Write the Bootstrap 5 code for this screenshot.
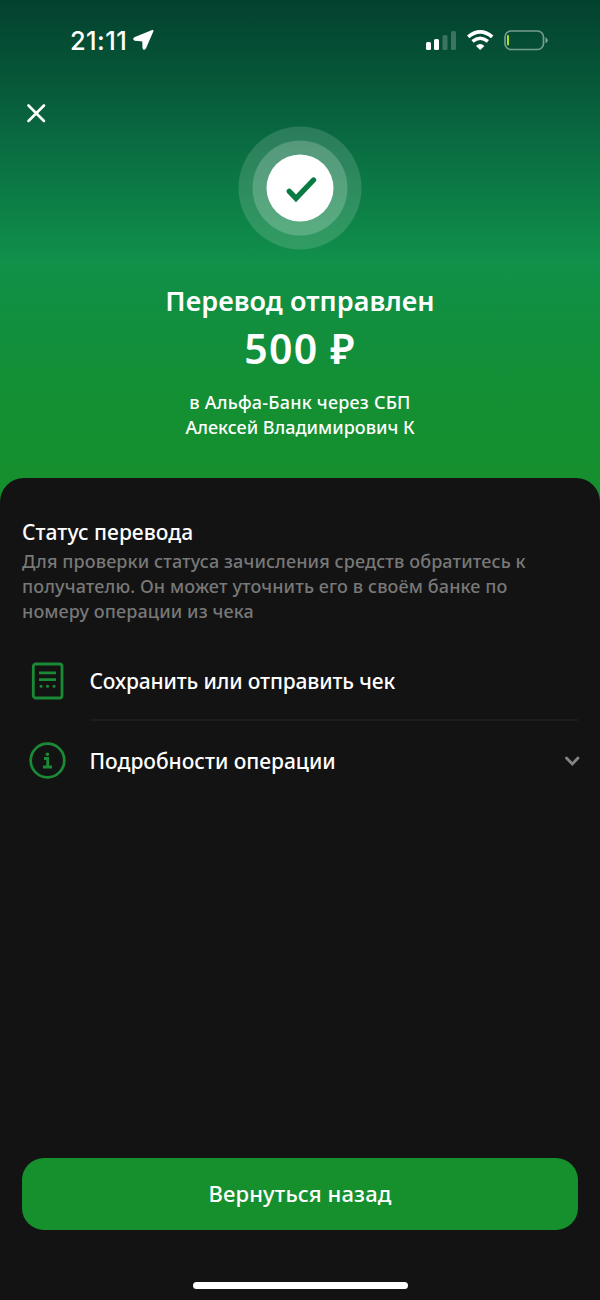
<!DOCTYPE html>
<html lang="ru">
<head>
<meta charset="utf-8">
<meta name="viewport" content="width=device-width, initial-scale=1">
<title>Перевод отправлен</title>
<link href="https://cdn.jsdelivr.net/npm/bootstrap@5.3.0/dist/css/bootstrap.min.css" rel="stylesheet">
<style>
  body { background: #131313; color: #fff; font-family: "Noto Sans", "Open Sans", sans-serif; font-weight: 500; }
  .screen { height: 1300px; overflow: hidden; background: linear-gradient(#03412f 0, #075a3a 90px, #0a7143 160px, #10904a 260px, #128f3d 330px, #148f32 410px, #16902d 500px); }
  .statusbar { height: 80px; padding: 0 52px 0 70px; }
  .clock { font: 550 25.5px/30px Inter, sans-serif; letter-spacing: .4px; padding-top: 2px; }
  .close-btn { margin: 16px 0 0 20px; width: 32px; height: 32px; }
  .hero-box { height: 398px; }
  .hero-mark { margin-top: -2px; }
  .headline { font-size: 27px; line-height: 36px; font-weight: 600; letter-spacing: .08px; margin: 33px 0 0; }
  .amount { font-size: 41px; line-height: 50px; font-weight: 600; letter-spacing: 1.2px; margin: 4px 0 0; }
  .dest { font-size: 18px; line-height: 25px; margin: 17px 0 0; }
  .dest-bank { letter-spacing: .22px; }
  .sheet { background: #131313; border-radius: 24px 24px 0 0; height: 822px; padding: 40px 22px 0; }
  .sheet-title { font-size: 21px; line-height: 28px; font-weight: 500; letter-spacing: .05px; margin: 0; }
  .hint { font-size: 18px; line-height: 25px; letter-spacing: .11px; color: #787878; margin: 3px 0 18px; }
  .op-row { height: 79px; font-size: 21px; letter-spacing: -.14px; }
  .op-row + .op-row { letter-spacing: -.02px; }
  .op-icon { width: 68px; padding-left: 5px; }
  .op-text { padding-top: 3px; margin-left: -.5px; }
  .op-line { border-bottom: 2px solid #1d1d1d; }
  .op-chevron { margin: 0 -2px 2px 0; }
  .btn-back { height: 72px; border-radius: 22px; background: #16902d; color: #fff; font-size: 22px; font-weight: 500; letter-spacing: .12px; border: 0; padding: 0 0 1px; }
  .btn-back:hover { background: #137f27; color: #fff; }
  .home-bar { width: 215px; height: 7px; background: #fff; margin: 52px auto 11px; }
</style>
</head>
<body>
<main class="screen d-flex flex-column">
  <div class="statusbar d-flex align-items-center justify-content-between">
    <div class="d-flex align-items-center"><span class="clock">21:11</span>
      <svg width="24" height="22" viewBox="-1.500 0 24 22" class="ms-1"><path d="M20 1.800 L2.200 9.200 Q1 10.300 2.500 10.700 L10.700 11.500 L11 19 Q11.500 20.600 12.500 19Z" fill="#fff" stroke="#fff" stroke-width="2" stroke-linejoin="round"/></svg>
    </div>
    <svg width="122" height="24" viewBox="426 28 122 24" fill="none">
      <rect x="426" y="42" width="5" height="8" rx="1.5" fill="#fff"/><rect x="434" y="39" width="5" height="11" rx="1.5" fill="#fff"/>
      <rect x="442.5" y="35" width="5" height="15" rx="1.5" fill="#fff" opacity=".22"/><rect x="451" y="31" width="5" height="19" rx="1.5" fill="#fff" opacity=".22"/>
      <path d="M468.200 36.800 Q480.200 26.800 492.200 36.800" stroke="#fff" stroke-width="3.600"/><path d="M472.500 41.400 Q480.200 35 487.900 41.400" stroke="#fff" stroke-width="3.400"/><path d="M476 46 Q480.200 42 484.400 46 L480.200 50Z" fill="#fff"/>
      <rect x="505" y="31" width="38.500" height="18.500" rx="6" stroke="#fff" stroke-opacity=".45" stroke-width="1.700"/>
      <path d="M545.500 37 Q550 40.300 545.500 43.600Z" fill="#fff" opacity=".5"/><rect x="507" y="35" width="2" height="10.500" rx="1" fill="#b5d92b"/>
    </svg>
  </div>
  <section class="hero-box d-flex flex-column">
    <button class="close-btn btn p-0 d-flex flex-shrink-0" type="button" aria-label="Закрыть"><svg width="32" height="32" viewBox="20 97 32 32"><path d="M28 105 44.500 121.500M44.500 105 28 121.500" stroke="#fff" stroke-width="2.800" stroke-linecap="round"/></svg></button>
    <div class="text-center">
      <svg class="hero-mark d-block mx-auto" width="124" height="124" viewBox="238 126 124 124"><g fill="#fff"><circle cx="300" cy="188" r="61.500" opacity=".14"/><circle cx="300" cy="188" r="47.500" opacity=".2"/><circle cx="300" cy="188" r="33.500"/></g><path d="M289.300 191.300 296 198.300 313.500 180" fill="none" stroke="#087b43" stroke-width="5.400" stroke-linecap="round"/></svg>
      <h1 class="headline">Перевод отправлен</h1>
      <p class="amount">500 ₽</p>
      <p class="dest"><span class="dest-bank">в Альфа-Банк через СБП</span><br>Алексей Владимирович К</p>
    </div>
  </section>
  <section class="sheet d-flex flex-column">
    <h2 class="sheet-title">Статус перевода</h2>
    <p class="hint">Для проверки статуса зачисления средств обратитесь к<br>получателю. Он может уточнить его в своём банке по<br>номеру операции из чека</p>
    <div class="op-row d-flex">
      <div class="op-icon d-flex align-items-center flex-shrink-0">
        <svg width="40" height="40" viewBox="0 1 40 40" fill="none" stroke="#1b8a36" stroke-width="2.800"><rect x="6.300" y="3" width="28.700" height="34" rx="2.600"/><path d="M12 11.800h17M12 18.600h17"/><path d="M14 25.300h.1M20.500 25.300h.1M27 25.300h.1" stroke-width="3" stroke-linecap="round"/></svg>
      </div>
      <div class="op-text op-line flex-grow-1 d-flex align-items-center">Сохранить или отправить чек</div>
    </div>
    <div class="op-row d-flex">
      <div class="op-icon d-flex align-items-center flex-shrink-0">
        <svg width="40" height="40" viewBox="0 .5 40 40" fill="none" stroke="#1b8a36" stroke-width="2.700"><circle cx="20.500" cy="20" r="16.800"/><path d="M17 18H20.700v8M16 26.500h9" stroke-width="2.800"/><circle cx="20.400" cy="13.800" r="1.800" fill="#1b8a36" stroke="none"/></svg>
      </div>
      <div class="op-text flex-grow-1 d-flex align-items-center justify-content-between">Подробности операции
        <svg class="op-chevron" width="16" height="12" viewBox="0 0 16 12"><path d="M2.500 3 8.300 9 14 3" fill="none" stroke="#858585" stroke-width="2.800" stroke-linecap="round"/></svg>
      </div>
    </div>
    <button class="btn btn-back w-100 mt-auto flex-shrink-0" type="button">Вернуться назад</button>
    <div class="home-bar rounded-pill flex-shrink-0"></div>
  </section>
</main>
</body>
</html>
